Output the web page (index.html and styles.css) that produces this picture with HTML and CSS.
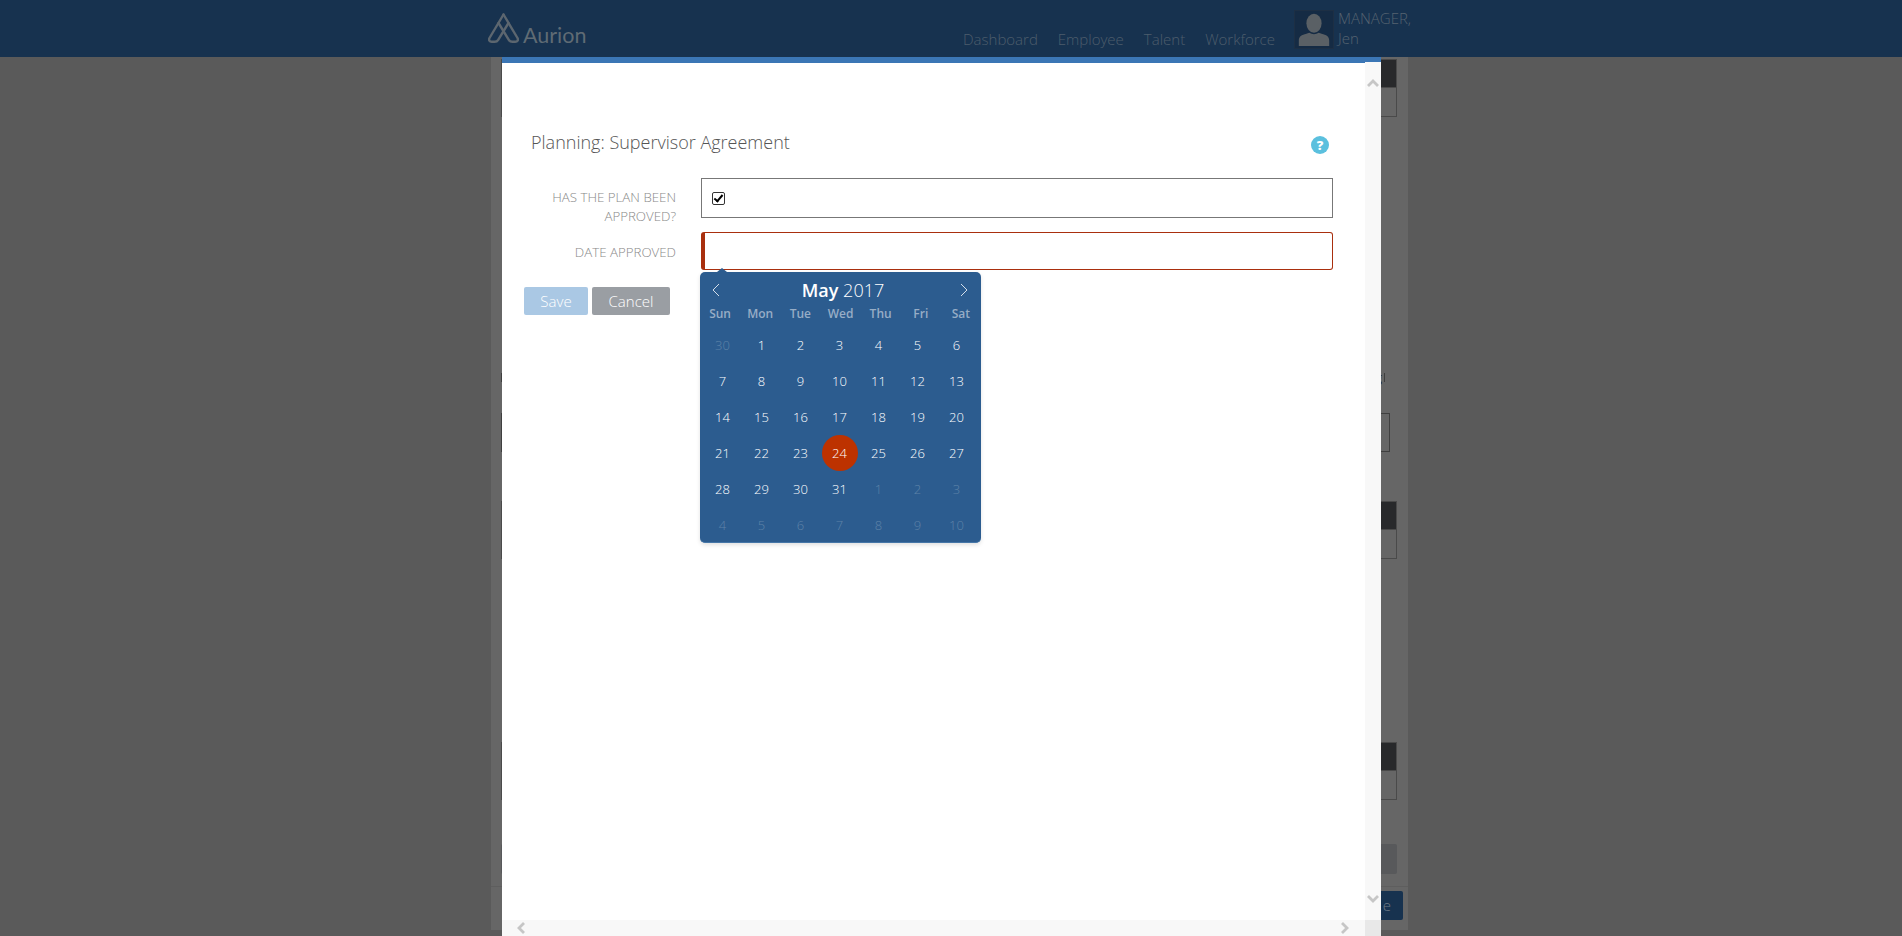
FILE: index.html
```html
<!DOCTYPE html>
<html lang="en">
<head>
    <meta charset="UTF-8">
    <title>Aurion - Planning: Supervisor Agreement</title>
    <link rel="stylesheet" href="styles.css">
</head>
<body>
    <header class="topbar">
        <a class="logo">
            <svg class="logo-mark" viewBox="0 0 31 30" width="31" height="30" fill="none" stroke="#5c666f" stroke-width="2.4" stroke-linejoin="round" stroke-linecap="round">
                <path d="M15.5 1.5L29.5 25c1 2 0 3.8-2.2 3.8h-3c-1.6 0-2.7-.7-3.5-2L10.5 10"/>
                <path d="M15.5 1.5L1.5 25c-1 2 0 3.8 2.2 3.8h3c1.6 0 2.7-.7 3.5-2L20.5 10"/>
            </svg>
            <span class="logo-text">Aurion</span>
        </a>
        <nav class="nav">
            <a>Dashboard</a>
            <a>Employee</a>
            <a>Talent</a>
            <a>Workforce</a>
        </nav>
        <div class="user">
            <div class="avatar">
                <svg viewBox="0 0 40 39" width="38" height="37" fill="#5a6065">
                    <ellipse cx="20" cy="13" rx="8" ry="10"/>
                    <path d="M4 37v-6c0-4 3-6 8-7l3-1c3 2 7 2 10 0l3 1c5 1 8 3 8 7v6z"/>
                </svg>
            </div>
            <div class="user-name">MANAGER,<br>Jen</div>
        </div>
    </header>

    <!-- page behind the dialog, dimmed -->
    <div class="page">
        <div class="panel"><div class="panel-head"></div></div>
        <div class="note">
            <span class="tick"></span>
            <span class="note-end">g<span class="tick"></span></span>
        </div>
        <div class="page-input"></div>
        <div class="panel panel-2"><div class="panel-head"></div></div>
        <div class="panel panel-3"><div class="panel-head"></div></div>
        <div class="page-btn"></div>
        <div class="page-foot"><span class="page-save">e</span></div>
    </div>

    <div class="modal">
        <div class="modal-main">
            <div class="modal-body">
                <div class="modal-title">
                    <h1>Planning: Supervisor Agreement</h1>
                    <span class="help">?</span>
                </div>
                <div class="form-row">
                    <label>HAS THE PLAN BEEN APPROVED?</label>
                    <div class="field check-field"><input type="checkbox" checked></div>
                </div>
                <div class="form-row date-row">
                    <label>DATE APPROVED</label>
                    <div class="field date-field"></div>
                </div>
                <div class="date-wrap">
                    <div class="buttons">
                        <button class="btn btn-save">Save</button>
                        <button class="btn btn-cancel">Cancel</button>
                    </div>
                    <div class="calendar">
                        <div class="cal-head">
                            <svg viewBox="0 0 10 14" width="10" height="14" fill="none" stroke="#d5dfea" stroke-width="1"><path d="M8 1L2 7l6 6"/></svg>
                            <div class="cal-month"><b>May</b> 2017</div>
                            <svg viewBox="0 0 10 14" width="10" height="14" fill="none" stroke="#d5dfea" stroke-width="1"><path d="M2 1l6 6-6 6"/></svg>
                        </div>
                        <div class="cal-weekdays">
                            <span>Sun</span><span>Mon</span><span>Tue</span><span>Wed</span><span>Thu</span><span>Fri</span><span>Sat</span>
                        </div>
                        <div class="cal-days" id="days"></div>
                    </div>
                </div>
            </div>
            <div class="scroll-v">
                <svg viewBox="0 0 12 8" width="12" height="8" fill="none" stroke="#c6c6c6" stroke-width="2.8"><path d="M1 7l5-5 5 5"/></svg>
                <svg viewBox="0 0 12 8" width="12" height="8" fill="none" stroke="#c6c6c6" stroke-width="2.8"><path d="M1 1l5 5 5-5"/></svg>
            </div>
        </div>
        <div class="scroll-h">
            <svg viewBox="0 0 8 12" width="8" height="12" fill="none" stroke="#c6c6c6" stroke-width="2.8"><path d="M7 1L2 6l5 5"/></svg>
            <svg viewBox="0 0 8 12" width="8" height="12" fill="none" stroke="#c6c6c6" stroke-width="2.8"><path d="M1 1l5 5-5 5"/></svg>
            <span class="scroll-corner"></span>
        </div>
    </div>

    <script>
        let days = [];
        days.push({ n: 30, cls: "off" });
        for (let i = 1; i <= 31; i++) {
            days.push({ n: i, cls: i === 24 ? "today" : "" });
        }
        for (let i = 1; i <= 10; i++) {
            days.push({ n: i, cls: "off" });
        }

        let html = "";
        days.forEach((d) => {
            html += `<span class="day ${d.cls}">${d.n}</span>`;
        });
        document.getElementById("days").innerHTML = html;
    </script>
</body>
</html>
```

FILE: styles.css
```css
html, body {
    height: 936px;
    overflow: hidden;
}
body {
    margin: 0;
    background: #5a5a5a;
    font-family: "Open Sans", Arial, sans-serif;
    font-weight: 300;
    position: relative;
}

/* top bar */
.topbar {
    height: 57px;
    background: #17324f;
    display: flex;
    padding-left: 488px;
    box-sizing: border-box;
}
.logo {
    display: flex;
    align-items: flex-end;
    height: 48px;
    width: 475px;
}
.logo-mark { margin-bottom: 5px; }
.logo-text {
    font-family: Lato, "Open Sans", sans-serif;
    font-weight: 400;
    font-size: 21.5px;
    line-height: 26px;
    color: #5f6b74;
    margin-left: 4px;
}
.nav {
    display: flex;
    gap: 20px;
    align-items: flex-end;
    height: 49px;
    width: 331px;
    font-size: 15px;
    line-height: 20px;
    color: #4d5d6c;
}
.user {
    display: flex;
    padding-top: 10px;
}
.avatar {
    width: 38px;
    height: 37px;
    border: 1px solid #1d2f44;
    background: #152b44;
}
.avatar svg { display: block; }
.user-name {
    margin-left: 4px;
    margin-top: -2px;
    font-size: 15px;
    line-height: 20px;
    color: #55626f;
}

/* page behind the dialog */
.page {
    margin-left: 491px;
    width: 917px;
    height: 873px;
    box-sizing: border-box;
    padding: 2px 11px 0 10px;
    background: #666;
    display: flex;
    flex-direction: column;
}
.panel {
    height: 58px;
    box-sizing: border-box;
    border: 1px solid #4a4a4a;
}
.panel-head {
    height: 27px;
    background: #28292b;
    border-bottom: 1px solid #4a4a4a;
}
.panel-2 { margin-top: 49px; }
.panel-3 { margin-top: 183px; }
.note {
    margin-top: 251px;
    margin-right: 12px;
    height: 18px;
    display: flex;
    justify-content: space-between;
    align-items: center;
    font-size: 13px;
    line-height: 18px;
    color: #222;
    font-weight: 400;
}
.note-end {
    display: flex;
    align-items: center;
    gap: 2px;
}
.tick {
    display: block;
    width: 1px;
    height: 9px;
    background: #3f3f3f;
}
.page-input {
    margin-top: 27px;
    height: 39px;
    margin-right: 7px;
    box-sizing: border-box;
    border: 1px solid #3f3f3f;
}
.page-btn {
    margin-top: 44px;
    height: 30px;
    background: #58595b;
    border-radius: 2px;
}
.page-foot {
    margin: 12px -11px 0 -10px;
    border-top: 1px solid #5e5e5e;
    padding-top: 4px;
    padding-right: 5px;
    display: flex;
    justify-content: flex-end;
}
.page-save {
    width: 120px;
    height: 29px;
    background: #17324f;
    border-radius: 2px;
    color: #6f7b87;
    font-size: 15px;
    line-height: 29px;
    text-align: right;
    padding-right: 12px;
    box-sizing: border-box;
}

/* dialog */
.modal {
    position: absolute;
    left: 502px;
    top: 57px;
    width: 879px;
    height: 879px;
    box-sizing: border-box;
    border-top: 6px solid #3b76b5;
    background: #fff;
    display: flex;
    flex-direction: column;
}
.modal-main {
    flex: 1;
    display: flex;
    min-height: 0;
}
.modal-body {
    flex: 1;
    min-width: 0;
    padding: 67px 36px 0 22px;
}
.modal-title {
    display: flex;
    justify-content: space-between;
    align-items: center;
    margin-left: 7px;
    height: 24px;
    margin-bottom: 24px;
}
.modal-title h1 {
    margin: 0;
    font-size: 18px;
    font-weight: 300;
    color: #555;
}
.help {
    width: 18px;
    height: 18px;
    margin-top: 5px;
    border-radius: 50%;
    background: #5bc0de;
    color: #fff;
    font-size: 13px;
    font-weight: 800;
    line-height: 18px;
    text-align: center;
}
.form-row {
    display: grid;
    grid-template-columns: 152px 632px;
    column-gap: 25px;
    height: 40px;
    margin-bottom: 14px;
}
.form-row label {
    font-size: 13.3px;
    line-height: 19px;
    color: #888;
    text-align: right;
    padding-top: 10px;
}
.field {
    height: 40px;
    box-sizing: border-box;
    border: 1px solid #777;
}
.check-field {
    display: flex;
    align-items: center;
    padding-left: 10px;
}
.check-field input {
    appearance: none;
    position: relative;
    width: 13px;
    height: 13px;
    margin: 0;
    box-sizing: border-box;
    border: 1px solid #333;
    border-radius: 2px;
    background: #fff;
}
.check-field input::after {
    content: "";
    position: absolute;
    left: 3px;
    top: 0;
    width: 3px;
    height: 7px;
    border-right: 2px solid #000;
    border-bottom: 2px solid #000;
    transform: rotate(40deg);
}
.date-row {
    height: 38px;
    margin-bottom: 0;
}
.date-row .field {
    height: 38px;
    border: 1px solid #a92f0e;
    border-left-width: 4px;
    border-radius: 3px;
}
.date-row label { padding-top: 11px; }

.date-wrap {
    display: flex;
    align-items: flex-start;
}
.buttons {
    display: flex;
    gap: 4px;
    margin-top: 17px;
    width: 176px;
}
.btn {
    height: 28px;
    padding: 0;
    border: none;
    border-radius: 2px;
    color: #fff;
    font-family: "Open Sans", Arial, sans-serif;
    font-weight: 300;
    font-size: 15px;
}
.btn-save { width: 64px; background: #aac8e4; }
.btn-cancel { width: 78px; background: #9a9ea3; }

/* calendar */
.calendar {
    position: relative;
    margin-top: 2px;
    width: 281px;
    height: 271px;
    box-sizing: border-box;
    background: #2c5c8f;
    border-bottom: 1px solid #4677a8;
    border-radius: 5px;
    box-shadow: 0 2px 4px rgba(0, 0, 0, 0.12);
}
.calendar::before {
    content: "";
    position: absolute;
    left: 17px;
    top: -4px;
    border: 5px solid transparent;
    border-top: 0;
    border-bottom: 4px solid #2c5c8f;
}
.cal-head {
    height: 34px;
    display: flex;
    justify-content: space-between;
    align-items: center;
    padding: 2px 12px 0 11px;
    box-sizing: border-box;
}
.cal-month {
    font-size: 18px;
    color: #fff;
    margin-left: 6px;
    line-height: 32px;
}
.cal-month b { font-weight: 600; }
.cal-weekdays {
    display: grid;
    grid-template-columns: repeat(7, 1fr);
    height: 20px;
    margin-top: -2px;
    font-size: 12px;
    line-height: 20px;
    font-weight: 600;
    color: #97adc6;
    text-align: center;
}
.cal-days {
    display: grid;
    grid-template-columns: repeat(7, 39px);
    grid-auto-rows: 36px;
    padding-left: 3px;
    margin-top: 3px;
}
.day {
    font-size: 13px;
    font-weight: 300;
    line-height: 36px;
    text-align: center;
    color: #fff;
    border-radius: 50%;
}
.day.off { color: #5e83a8; }
.day.today {
    width: 36px;
    margin-left: 1.5px;
    background: #bd3200;
}

/* scroll bars */
.scroll-v {
    flex: none;
    width: 16px;
    background: #f8f8f8;
    display: flex;
    flex-direction: column;
    justify-content: space-between;
    align-items: center;
    padding: 17px 0 17px;
    box-sizing: border-box;
    margin-top: -1px;
}
.scroll-h {
    flex: none;
    height: 16px;
    background: #f8f8f8;
    display: flex;
    align-items: center;
    justify-content: space-between;
    padding: 0 32px 0 15px;
    position: relative;
}
.scroll-corner {
    position: absolute;
    right: 0;
    top: 0;
    width: 16px;
    height: 16px;
    background: #e8e8e8;
}
```
